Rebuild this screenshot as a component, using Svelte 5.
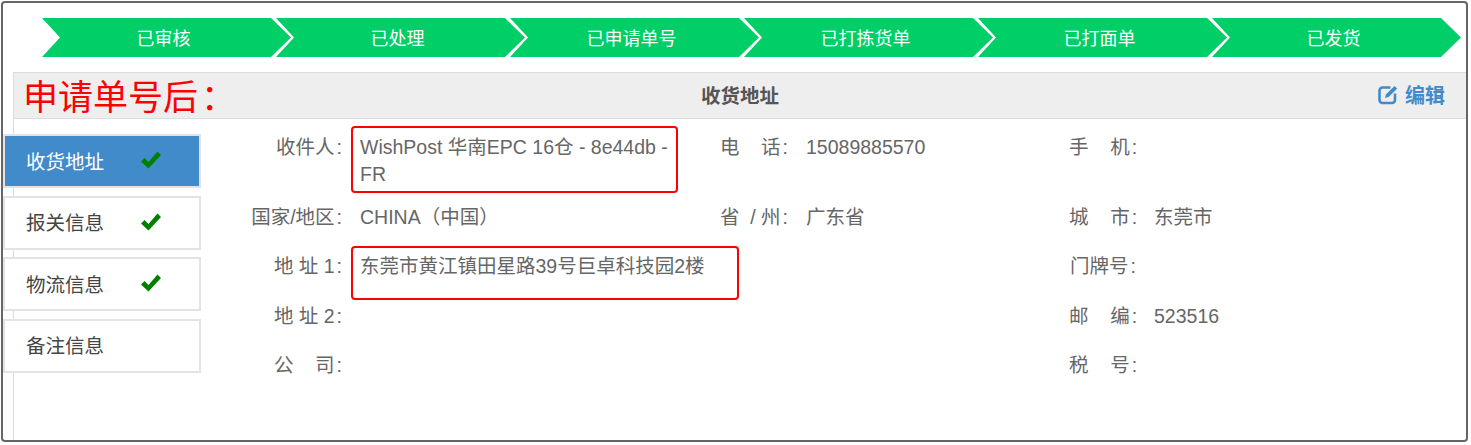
<script>
    const sp4 = "\u00a0\u00a0\u00a0\u00a0";
    const steps = ["已审核", "已处理", "已申请单号", "已打拣货单", "已打面单", "已发货"];
    const tabs = [
        { name: "收货地址", done: true, active: true },
        { name: "报关信息", done: true },
        { name: "物流信息", done: true },
        { name: "备注信息", done: false },
    ];
    const fields = [
        ["收件人", "WishPost 华南EPC 16仓 - 8e44db - FR", "box1"],
        [`电${sp4}话`, "15089885570"],
        [`手${sp4}机`, ""],
        ["国家/地区", "CHINA（中国）"],
        ["省\u00a0\u00a0/ 州", "广东省"],
        [`城${sp4}市`, "东莞市"],
        ["地 址 1", "东莞市黄江镇田星路39号巨卓科技园2楼", "box2"],
        ["", ""],
        ["门牌号", ""],
        ["地 址 2", ""],
        ["", ""],
        [`邮${sp4}编`, "523516"],
        [`公${sp4}司`, ""],
        ["", ""],
        [`税${sp4}号`, ""],
    ];
</script>

<div class="frame">
    <ol class="steps">
        {#each steps as s}
            <li>{s}</li>
        {/each}
    </ol>

    <section class="panel">
        <header>
            <span class="note">申请单号后<em>：</em></span>
            <h2>收货地址</h2>
            <a href="#edit" class="edit">
                <svg width="20" height="20" viewBox="0 0 20 20" fill="none">
                    <path d="M12.500 2.500H4.500a3 3 0 0 0-3 3V15a3 3 0 0 0 3 3H14a3 3 0 0 0 3-3V8.500" stroke="currentColor" stroke-width="2.600" />
                    <path d="M7 13l.9-3.600L16.500.9l2.700 2.700-8.600 8.500z" fill="currentColor" />
                </svg>
                <span>编辑</span>
            </a>
        </header>
        <div class="body">
            <ul class="tabs">
                {#each tabs as t}
                    <li class:active={t.active}>
                        <span>{t.name}</span>
                        {#if t.done}
                            <svg class="check" width="22" height="20" viewBox="0 0 22 20">
                                <path d="M1 11.500l3.500-3.500 4 4L17.500 1.500 21 5 8.500 18.500z" fill="#008000" />
                            </svg>
                        {/if}
                    </li>
                {/each}
            </ul>
            <div class="form">
                {#each fields as f}
                    <div class="label">
                        {#if f[0]}{f[0]}<b>:</b>{/if}
                    </div>
                    <div class="value" class:nowrap={f[2] === "box2"}>
                        {#if f[2]}<i class={f[2]}></i>{/if}{f[1]}
                    </div>
                {/each}
            </div>
        </div>
    </section>
</div>

<style>
    :global(body) {
        background: #fff;
    }
    .frame {
        box-sizing: border-box;
        width: 1467px;
        height: 441px;
        margin: 1px 0 0 1px;
        border: 2px solid #666;
        border-radius: 4px;
        padding-top: 15px;
        overflow: hidden;
        font-family: "Liberation Sans", "Noto Sans CJK SC", sans-serif;
        font-size: 19.500px;
        color: #666;
    }
    .steps {
        list-style: none;
        margin: 0 0 15px 39px;
        padding: 0;
        display: flex;
    }
    .steps li {
        flex: none;
        box-sizing: border-box;
        width: 249px;
        height: 39px;
        margin-right: -15px;
        padding-right: 6px;
        background: #00cf68;
        color: #fff;
        font-size: 18px;
        line-height: 42px;
        text-align: center;
        clip-path: polygon(0 0, calc(100% - 20px) 0, 100% 50%, calc(100% - 20px) 100%, 0 100%, 18px 50%);
    }
    .panel {
        margin-left: 10px;
        height: 400px;
        border-left: 1px solid #ddd;
    }
    header {
        box-sizing: border-box;
        height: 47px;
        display: grid;
        grid-template-columns: 1fr auto 1fr;
        align-items: center;
        background: #eee;
        border-top: 1px solid #ddd;
        border-bottom: 1px solid #ddd;
    }
    .note {
        padding: 3px 0 0 9px;
        font-size: 35px;
        line-height: 43px;
        color: #f00;
        white-space: nowrap;
    }
    .note em {
        font-style: normal;
        margin-left: 3px;
    }
    h2 {
        margin: 0 0 3px;
        font-size: 19.500px;
        font-weight: 700;
        color: #555;
    }
    .edit {
        justify-self: end;
        display: flex;
        align-items: center;
        gap: 7px;
        margin: 0 21px 3px 0;
        color: #428bca;
        font-weight: 700;
        font-size: 20px;
        text-decoration: none;
    }
    .body {
        display: flex;
    }
    .tabs {
        list-style: none;
        flex: none;
        width: 198px;
        margin: 15px -1px 0 -11px;
        padding: 0;
        display: flex;
        flex-direction: column;
        gap: 7.500px;
    }
    .tabs li {
        box-sizing: border-box;
        height: 54px;
        display: flex;
        align-items: center;
        padding: 0 0 2px 21px;
        background: #fff;
        border: 2px solid #e3e3e3;
        color: #444;
    }
    .tabs li span {
        width: 114px;
    }
    .tabs li.active {
        background: #428bca;
        color: #fff;
    }
    .form {
        flex: 1;
        margin-top: 14.500px;
        display: grid;
        grid-template-columns: 142px 338px 108px 281px 67px 1fr;
        grid-template-rows: 70px 49px 50px 49px 49px;
        line-height: 27px;
    }
    .label {
        text-align: right;
        white-space: nowrap;
    }
    .label b {
        font-weight: 400;
        margin-left: 2px;
    }
    .value {
        position: relative;
        padding-left: 18px;
    }
    .value.nowrap {
        white-space: nowrap;
    }
    .box1,
    .box2 {
        position: absolute;
        left: 9px;
        border: 2px solid #f00;
        border-radius: 4px;
        pointer-events: none;
    }
    .box1 {
        top: -8px;
        width: 323px;
        height: 63px;
    }
    .box2 {
        top: -7px;
        width: 384px;
        height: 50px;
    }
</style>
